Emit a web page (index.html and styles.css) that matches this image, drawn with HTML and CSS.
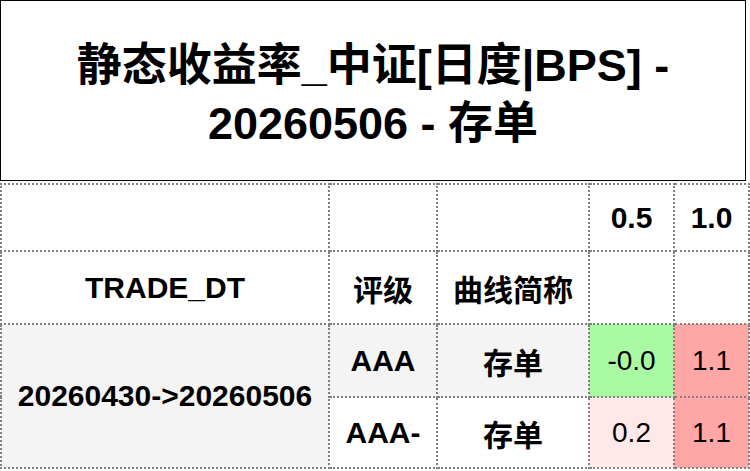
FILE: index.html
```html
<!DOCTYPE html>
<html lang="zh">
<head>
<meta charset="utf-8">
<link rel="stylesheet" href="styles.css">
</head>
<body>
<div class="title"><span class="title-text">静态收益率_中证[日度|BPS] -<br>20260506 - 存单</span></div>
<table class="grid">
  <colgroup>
    <col class="c1"><col class="c2"><col class="c3"><col class="c4"><col class="c5">
  </colgroup>
  <thead>
    <tr class="h1"><th></th><th></th><th></th><th>0.5</th><th>1.0</th></tr>
    <tr class="h2"><th>TRADE_DT</th><th>评级</th><th>曲线简称</th><th></th><th></th></tr>
  </thead>
  <tbody>
    <tr class="r1">
      <th rowspan="2" class="date">20260430-&gt;20260506</th>
      <td class="lbl gray">AAA</td>
      <td class="lbl gray">存单</td>
      <td class="v green">-0.0</td>
      <td class="v red">1.1</td>
    </tr>
    <tr class="r2">
      <td class="lbl">AAA-</td>
      <td class="lbl">存单</td>
      <td class="v pink">0.2</td>
      <td class="v red">1.1</td>
    </tr>
  </tbody>
</table>
</body>
</html>
```

FILE: styles.css
```css
html, body {
  margin: 0;
  padding: 0;
  background: #ffffff;
}
body {
  font-family: "Liberation Sans", "Noto Sans CJK SC", sans-serif;
  color: #000;
}
.title {
  box-sizing: border-box;
  width: 746px;
  height: 181px;
  border: 1px solid #000;
  display: flex;
  align-items: center;
  justify-content: center;
  padding: 8px 0 0 0;
  margin-bottom: 2px;
  overflow: hidden;
}
.title-text {
  display: inline-block;
  flex: none;
  white-space: nowrap;
  text-align: center;
  font-size: 45px;
  line-height: 58px;
  font-weight: bold;
}
.grid {
  border-collapse: collapse;
  table-layout: fixed;
  width: 748px;
  font-size: 30px;
}
.grid .c1 { width: 328px; }
.grid .c2 { width: 108px; }
.grid .c3 { width: 152px; }
.grid .c4 { width: 85px; }
.grid .c5 { width: 75px; }
.grid th, .grid td {
  border: 2px dotted #808080;
  padding: 0;
  text-align: center;
  vertical-align: middle;
  white-space: nowrap;
}
.grid th, .grid .lbl {
  font-weight: bold;
}
.grid .h1 th { height: 65px; }
.grid .h2 th { height: 71px; }
.grid .r1 td { height: 71px; }
.grid .r2 td { height: 69px; }
.grid .date { background: #f4f4f4; }
.grid .gray { background: #f4f4f4; }
.grid .v { font-weight: normal; font-size: 28px; }
.grid .green { background: #a9f9a3; }
.grid .red { background: #ffa6a6; }
.grid .pink { background: #ffe8e8; }
```
